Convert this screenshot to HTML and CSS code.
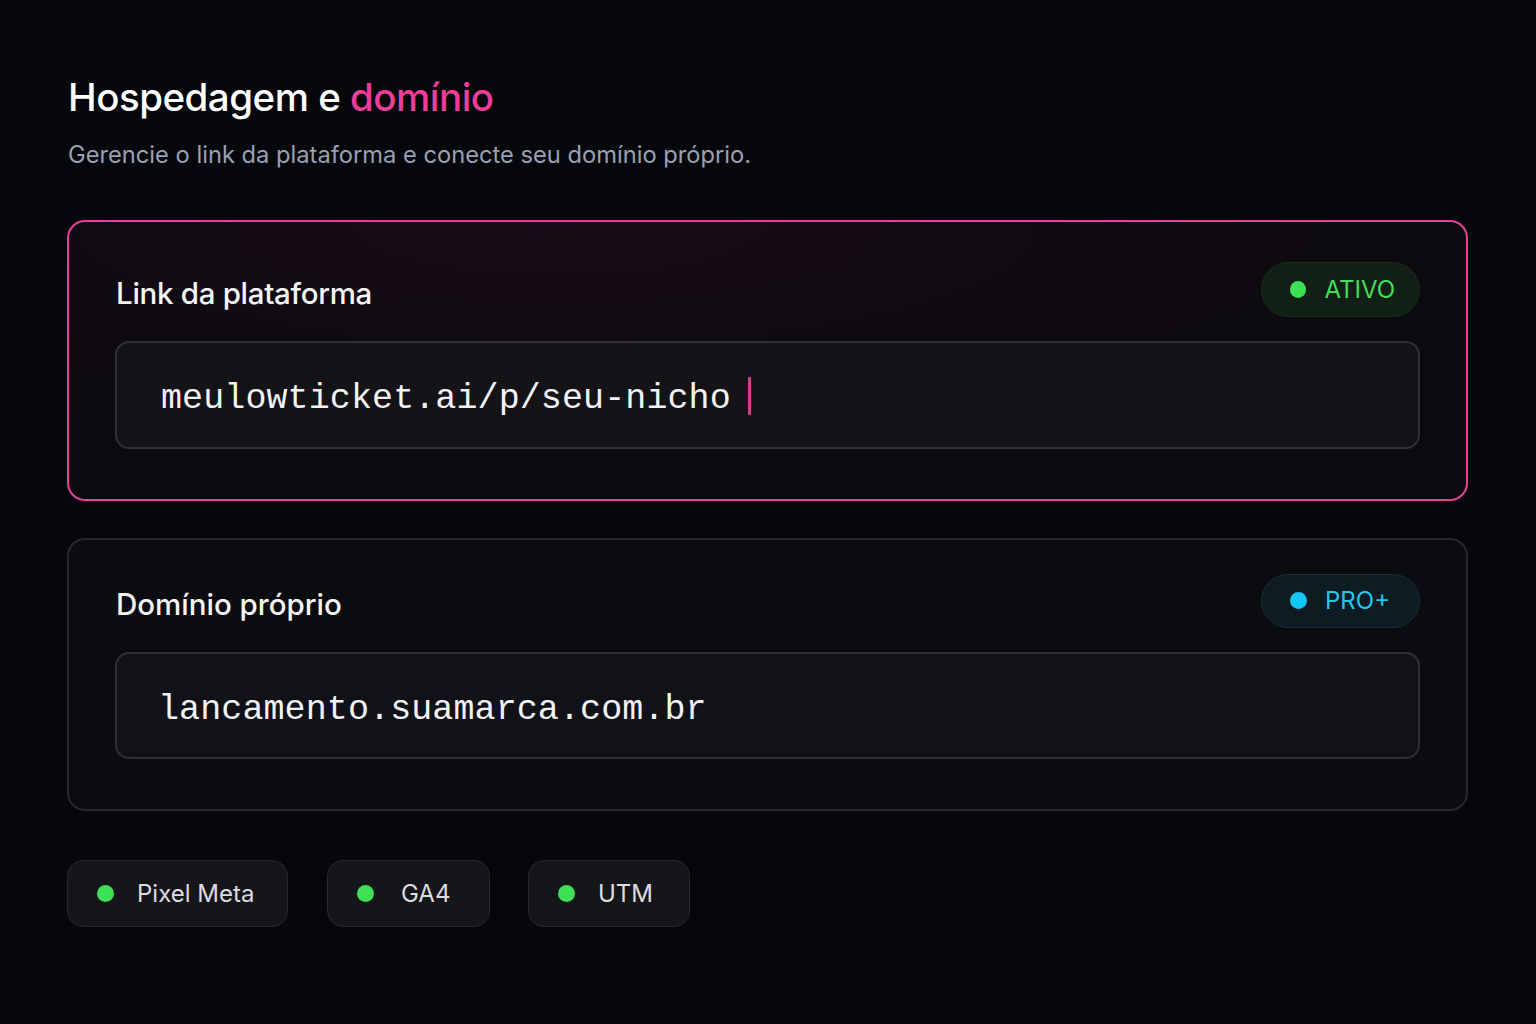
FILE: index.html
```html
<!DOCTYPE html>
<html lang="pt-BR">
<head>
<meta charset="utf-8">
<title>Hospedagem e domínio</title>
<link rel="stylesheet" href="styles.css">
</head>
<body>
<main class="page">
  <header class="head">
    <h1 class="title">Hospedagem e <span class="accent">domínio</span></h1>
    <p class="subtitle">Gerencie o link da plataforma e conecte seu domínio próprio.</p>
  </header>

  <section class="card card--active">
    <div class="card-head">
      <h2 class="card-title">Link da plataforma</h2>
      <span class="badge badge--green"><span class="dot"></span>ATIVO</span>
    </div>
    <div class="field">
      <span class="field-text">meulowticket.ai/p/seu-nicho</span><span class="caret"></span>
    </div>
  </section>

  <section class="card card--plain">
    <div class="card-head">
      <h2 class="card-title">Domínio próprio</h2>
      <span class="badge badge--cyan"><span class="dot"></span>PRO+</span>
    </div>
    <div class="field">
      <span class="field-text">lancamento.suamarca.com.br</span>
    </div>
  </section>

  <div class="chips">
    <span class="chip chip--pixel"><span class="dot"></span>Pixel Meta</span>
    <span class="chip chip--ga"><span class="dot"></span>GA4</span>
    <span class="chip chip--utm"><span class="dot"></span>UTM</span>
  </div>
</main>
</body>
</html>
```

FILE: styles.css
```css
* { box-sizing: border-box; }
html, body { margin: 0; padding: 0; }
body {
  width: 1536px;
  height: 1024px;
  overflow: hidden;
  background: #06070b;
  font-family: Inter, "Noto Sans", sans-serif;
  color: #f4f4f6;
}
.page {
  padding: 72px 68px 0 67px;
  display: flex;
  flex-direction: column;
}
.head { margin-bottom: 50px; padding-left: 1px; }
.title {
  margin: 0;
  font-size: 38.5px;
  font-weight: 500;
  letter-spacing: -0.5px;
  line-height: 50px;
  color: #ffffff;
}
.accent { color: #ec3d9b; }
.subtitle {
  margin: 18px 0 0;
  font-size: 23.7px;
  line-height: 30px;
  color: #98a0b2;
}
.card {
  width: 1401px;
  border-radius: 18px;
  padding: 40px 46px 50px 46px;
  display: flex;
  flex-direction: column;
  gap: 24px;
}
.card--active {
  border: 2px solid #e5409b;
  background: radial-gradient(ellipse 70% 90% at 35% 0%, #1a0c18 0%, #100a12 50%, #0b0a0e 100%);
}
.card--plain {
  margin-top: 37px;
  padding-top: 33px;
  border: 2px solid #26282e;
  background: #0b0c10;
}
.card-head {
  display: flex;
  align-items: center;
  justify-content: space-between;
  height: 55px;
  padding-left: 1px;
}
.card-title {
  margin: 6px 0 0;
  font-size: 29.5px;
  font-weight: 500;
  letter-spacing: -0.3px;
  color: #f5f5f7;
}
.card--plain .card-title { letter-spacing: 0; }
.badge {
  display: inline-flex;
  align-items: center;
  gap: 18px;
  height: 55px;
  padding: 0 24px 0 28px;
  border-radius: 28px;
  font-size: 24px;
  font-weight: 400;
}
.badge .dot { width: 17px; height: 17px; border-radius: 50%; }
.badge--green {
  width: 159px;
  background: #112014;
  border: 1.5px solid #1b2d1e;
  color: #45dd58;
}
.badge--green .dot { background: #3ee055; }
.badge--cyan {
  width: 159px;
  height: 54px;
  background: #0d1b22;
  border: 1.5px solid #16303a;
  color: #22c7ee;
}
.badge--cyan .dot { background: #12c6f5; }
.field {
  height: 108px;
  border-radius: 14px;
  background: #131318;
  border: 2px solid #2f3036;
  display: flex;
  align-items: center;
  padding: 8px 0 0 44px;
}
.card--plain .field { background: #111218; height: 107px; }
.field-text {
  font-family: "Liberation Mono", "DejaVu Sans Mono", monospace;
  font-size: 35px;
  letter-spacing: 0.1px;
  color: #f2f2f4;
}
.card--plain .field-text { margin-left: -3px; }
.caret {
  width: 3px;
  height: 38px;
  margin: -6px 0 0 17px;
  background: #d63d8e;
  border-radius: 1px;
}
.chips {
  margin-top: 49px;
  display: flex;
  gap: 38px;
}
.chip {
  display: inline-flex;
  align-items: center;
  gap: 23px;
  height: 67px;
  padding: 0 0 0 29px;
  border-radius: 16px;
  background: #15161a;
  border: 1.5px solid #27282d;
  font-size: 24px;
  color: #dcdce0;
}
.chip--pixel { width: 221px; margin-right: 1px; }
.chip--ga { width: 163px; gap: 27px; }
.chip--utm { width: 162px; }
.chip .dot {
  width: 17px;
  height: 17px;
  border-radius: 50%;
  background: #3ee055;
}
```
